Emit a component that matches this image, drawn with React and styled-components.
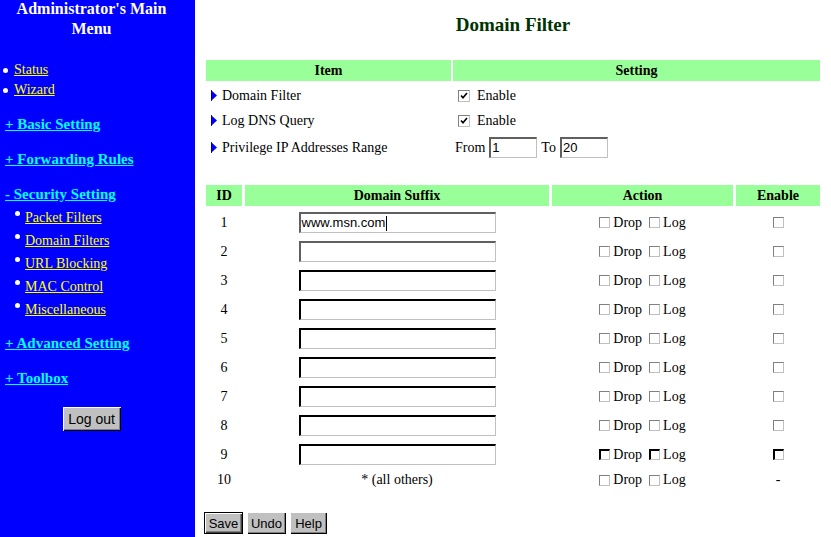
import React from 'react'
import styled, { createGlobalStyle } from 'styled-components'

const GlobalStyle = createGlobalStyle`
  html, body {
    margin: 0;
    padding: 0;
    background: #fff;
  }
  body {
    font-family: 'Liberation Serif', 'Times New Roman', serif;
  }
`

const Page = styled.div`
  display: flex;
  width: 831px;
  height: 537px;
  overflow: hidden;
`

const Sidebar = styled.nav`
  width: 195px;
  flex-shrink: 0;
  background: #0000ff;
  display: flex;
  flex-direction: column;
  padding-right: 12px;
  box-sizing: border-box;
`

const MenuTitle = styled.div`
  color: #fff;
  font-weight: bold;
  font-size: 16px;
  line-height: 20px;
  text-align: center;
  margin-top: -1px;
`

const LinkList = styled.ul`
  list-style: none;
  margin: ${p => p.$top}px 0 0 0;
  padding: 0 0 0 ${p => p.$indent}px;
  display: flex;
  flex-direction: column;
`

const LinkItem = styled.li`
  display: flex;
  align-items: center;
  height: ${p => p.$h}px;
  font-size: 14px;

  &::before {
    content: '';
    width: 5px;
    height: 5px;
    border-radius: 50%;
    background: #fff;
    margin-right: ${p => p.$gap}px;
    margin-top: ${p => p.$dotTop}px;
    flex-shrink: 0;
  }

  a {
    color: #ffff00;
    text-decoration: underline;
  }
`

const Section = styled.a`
  display: block;
  color: #00ffff;
  font-weight: bold;
  font-size: 15px;
  line-height: 20px;
  margin: ${p => p.$top}px 0 0 5px;
  text-decoration: underline;
  align-self: flex-start;
`

const LogoutRow = styled.div`
  display: flex;
  justify-content: center;
  margin-top: 19px;
`

const WinButton = styled.button`
  font-family: 'Liberation Sans', Arial, sans-serif;
  font-size: ${p => p.$fs || 13}px;
  color: #000;
  background: #c0c0c0;
  height: ${p => p.$h}px;
  width: ${p => p.$w}px;
  padding: 0;
  box-sizing: border-box;
  border: none;
  box-shadow: ${p =>
    p.$default
      ? 'inset 1px 1px 0 #000, inset -1px -1px 0 #000, inset 2px 2px 0 #fff, inset -2px -2px 0 #404040, inset -3px -3px 0 #808080'
      : 'inset 1px 1px 0 #fff, inset -1px -1px 0 #000, inset -2px -2px 0 #808080'};
`

const Main = styled.main`
  flex: 1;
  padding: 0 11px;
  display: flex;
  flex-direction: column;
`

const PageTitle = styled.h1`
  margin: 13px 0 0 0;
  font-size: 19px;
  line-height: 24px;
  color: #003300;
  text-align: center;
`

const Grid = styled.div`
  display: grid;
  grid-template-columns: ${p => p.$cols};
  column-gap: ${p => p.$gap}px;
  margin-top: ${p => p.$top}px;
  width: 614px;
  font-size: 14px;
`

const HeadCell = styled.div`
  background: #99ff99;
  height: 21px;
  line-height: 21px;
  text-align: center;
  font-weight: bold;
  margin-bottom: 2px;
`

const Cell = styled.div`
  height: ${p => p.$h}px;
  display: flex;
  align-items: center;
  justify-content: ${p => p.$align || 'flex-start'};
  padding-left: ${p => p.$pl || 0}px;
  white-space: nowrap;
`

const Arrow = () => (
  <svg width="6" height="11" viewBox="0 0 6 11" style={{ marginRight: 5 }}>
    <path d="M0 0 L6 5.5 L0 11 Z" fill="#0000ff" />
    <path d="M0 0 L0 11" stroke="#000080" strokeWidth="1.5" />
  </svg>
)

const Box = styled.span`
  display: inline-flex;
  align-items: center;
  justify-content: center;
  width: ${p => p.$size}px;
  height: ${p => p.$size}px;
  box-sizing: border-box;
  background: #fff;
  border-top: ${p => (p.$dark ? '2px solid #000' : '1px solid #808080')};
  border-left: ${p => (p.$dark ? '2px solid #000' : '1px solid #808080')};
  border-right: 1px solid #c0c0c0;
  border-bottom: 1px solid #c0c0c0;
  flex-shrink: 0;
`

const CheckBox = ({ checked, dark, size = 11 }) => (
  <Box $dark={dark} $size={size}>
    {checked && (
      <svg width="8" height="8" viewBox="0 0 8 8">
        <path d="M1 3.5 L3 5.8 L7 1" stroke="#000" strokeWidth="1.6" fill="none" />
      </svg>
    )}
  </Box>
)

const TextBox = styled.div`
  width: ${p => p.$w}px;
  height: 21px;
  box-sizing: border-box;
  background: #fff;
  border-top: 2px solid ${p => (p.$dark ? '#000' : '#606060')};
  border-left: 2px solid ${p => (p.$dark ? '#000' : '#606060')};
  border-right: 1px solid #c0c0c0;
  border-bottom: 1px solid #c0c0c0;
  font-family: 'Liberation Sans', Arial, sans-serif;
  font-size: 13px;
  line-height: 18px;
  padding-left: 1px;
  display: flex;
  align-items: center;
`

const Caret = styled.span`
  display: inline-block;
  width: 1px;
  height: 15px;
  background: #000;
  margin-left: 1px;
`

const Label = styled.span`
  margin-left: ${p => p.$ml || 0}px;
  margin-right: ${p => p.$mr || 0}px;
`

const ButtonBar = styled.div`
  display: flex;
  gap: 4px;
  margin-top: 21px;
  margin-left: -2px;
`

const ActionGroup = ({ dark }) => (
  <>
    <CheckBox dark={dark} />
    <Label $ml={3} $mr={7}>Drop</Label>
    <CheckBox dark={dark} />
    <Label $ml={3}>Log</Label>
  </>
)

const rows = Array.from({ length: 10 }, (_, i) => i + 1)

const App = () => {
  return (
    <Page>
      <GlobalStyle />
      <Sidebar>
        <MenuTitle>
          Administrator's Main
          <br />
          Menu
        </MenuTitle>
        <LinkList $top={21} $indent={3}>
          <LinkItem $h={20} $gap={6} $dotTop={0}>
            <a href="#">Status</a>
          </LinkItem>
          <LinkItem $h={20} $gap={6} $dotTop={0}>
            <a href="#">Wizard</a>
          </LinkItem>
        </LinkList>
        <Section href="#" $top={14}>+ Basic Setting</Section>
        <Section href="#" $top={15}>+ Forwarding Rules</Section>
        <Section href="#" $top={15}>- Security Setting</Section>
        <LinkList $top={2} $indent={15}>
          {['Packet Filters', 'Domain Filters', 'URL Blocking', 'MAC Control', 'Miscellaneous'].map(t => (
            <LinkItem key={t} $h={23} $gap={5} $dotTop={-8}>
              <a href="#">{t}</a>
            </LinkItem>
          ))}
        </LinkList>
        <Section href="#" $top={12}>+ Advanced Setting</Section>
        <Section href="#" $top={15}>+ Toolbox</Section>
        <LogoutRow>
          <WinButton $w={58} $h={24} $fs={14}>Log out</WinButton>
        </LogoutRow>
      </Sidebar>

      <Main>
        <PageTitle>Domain Filter</PageTitle>

        <Grid $cols="245px 367px" $gap={2} $top={23}>
          <HeadCell>Item</HeadCell>
          <HeadCell>Setting</HeadCell>

          <Cell $h={25} $pl={5}>
            <Arrow />
            Domain Filter
          </Cell>
          <Cell $h={25} $pl={5}>
            <CheckBox checked size={12} />
            <Label $ml={7}>Enable</Label>
          </Cell>

          <Cell $h={25} $pl={5}>
            <Arrow />
            Log DNS Query
          </Cell>
          <Cell $h={25} $pl={5}>
            <CheckBox checked size={12} />
            <Label $ml={7}>Enable</Label>
          </Cell>

          <Cell $h={29} $pl={5}>
            <Arrow />
            Privilege IP Addresses Range
          </Cell>
          <Cell $h={29} $pl={2}>
            <Label $mr={4}>From</Label>
            <TextBox $w={48}>1</TextBox>
            <Label $ml={4} $mr={4}>To</Label>
            <TextBox $w={48}>20</TextBox>
          </Cell>
        </Grid>

        <Grid $cols="36px 304px 181px 84px" $gap={3} $top={23}>
          <HeadCell>ID</HeadCell>
          <HeadCell>Domain Suffix</HeadCell>
          <HeadCell>Action</HeadCell>
          <HeadCell>Enable</HeadCell>

          {rows.map(n => {
            const h = n === 10 ? 22 : 29
            return (
              <React.Fragment key={n}>
                <Cell $h={h} $align="center">{n}</Cell>
                <Cell $h={h} $align="center">
                  {n === 10 ? (
                    '* (all others)'
                  ) : (
                    <TextBox $w={197} $dark={n > 2}>
                      {n === 1 && (
                        <>
                          www.msn.com
                          <Caret />
                        </>
                      )}
                    </TextBox>
                  )}
                </Cell>
                <Cell $h={h} $align="center">
                  <ActionGroup dark={n === 9} />
                </Cell>
                <Cell $h={h} $align="center">
                  {n === 10 ? '-' : <CheckBox dark={n === 9} />}
                </Cell>
              </React.Fragment>
            )
          })}
        </Grid>

        <ButtonBar>
          <WinButton $default $w={39} $h={22}>Save</WinButton>
          <WinButton $w={39} $h={22}>Undo</WinButton>
          <WinButton $w={37} $h={22}>Help</WinButton>
        </ButtonBar>
      </Main>
    </Page>
  )
}

export default App
